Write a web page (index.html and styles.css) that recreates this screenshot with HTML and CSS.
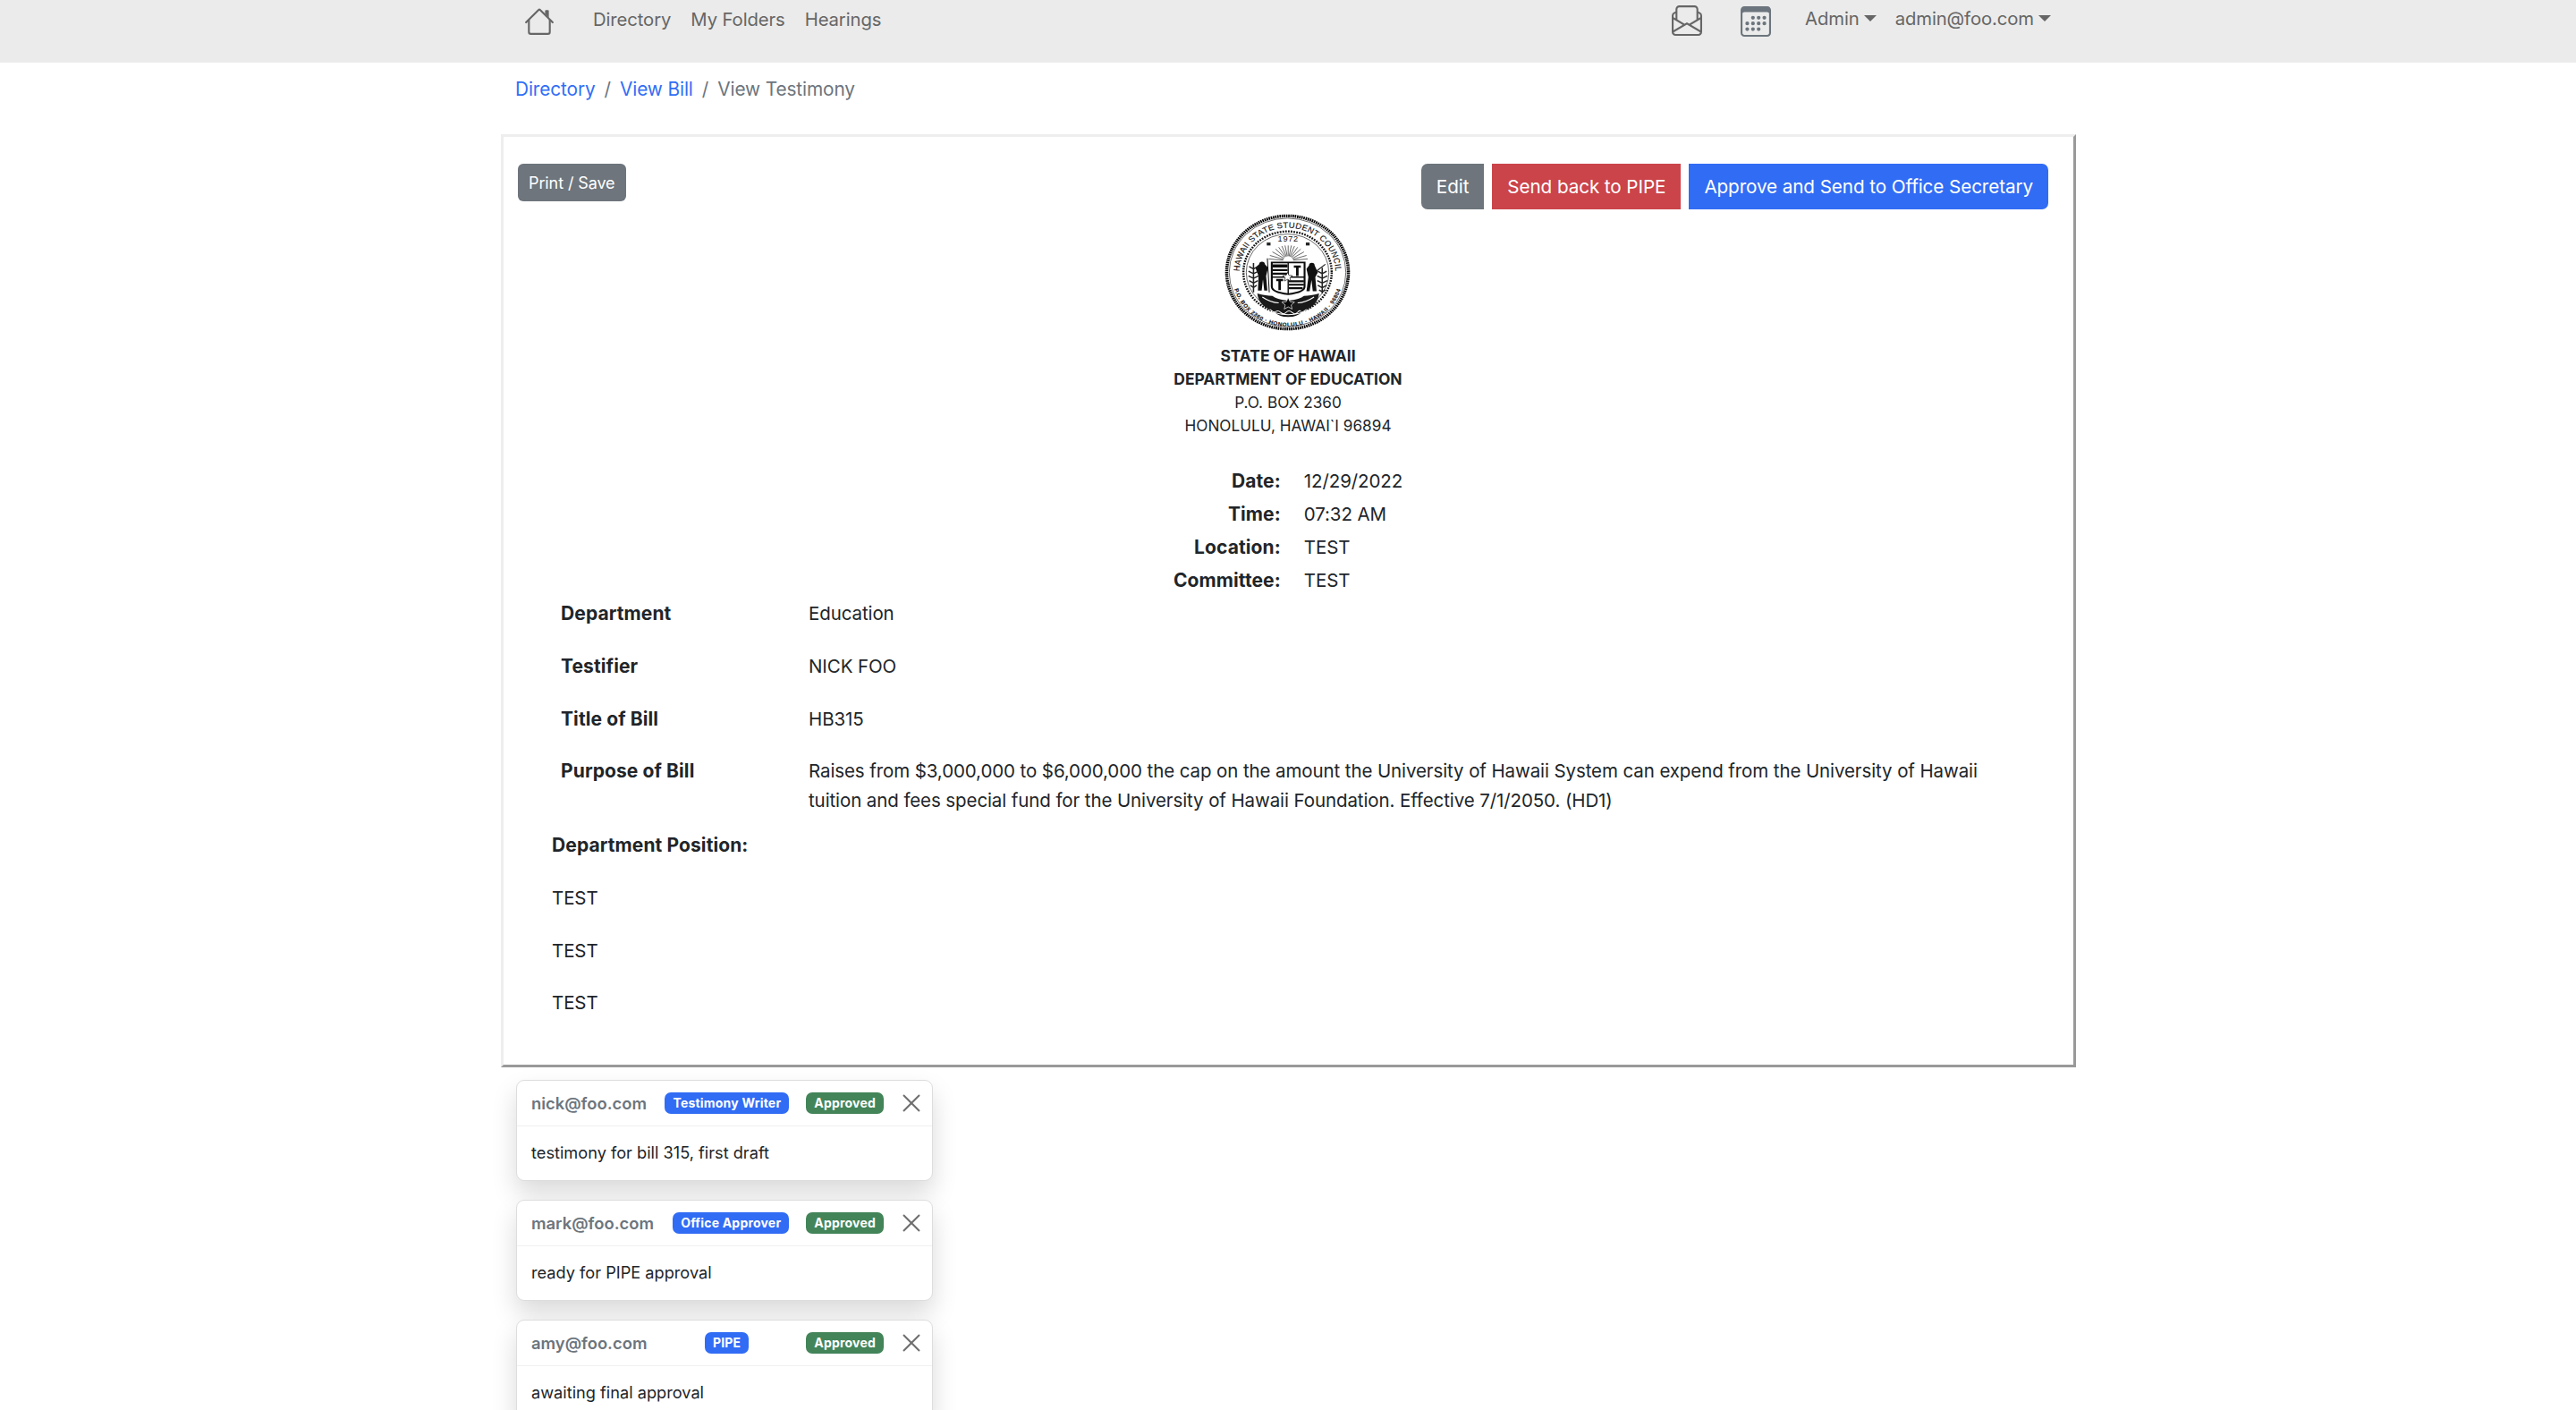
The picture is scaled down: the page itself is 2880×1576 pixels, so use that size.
FILE: index.html
```html
<!DOCTYPE html>
<html lang="en">
<head>
    <meta charset="UTF-8">
    <meta name="viewport" content="width=device-width, initial-scale=1.0">
    <title>View Testimony</title>
    <link rel="stylesheet" href="styles.css">
</head>
<body>
    <nav class="navbar">
        <svg class="nav-home" viewBox="0 0 16 16" fill="currentColor">
            <path fill-rule="evenodd" d="M2 13.5V7h1v6.5a.5.5 0 0 0 .5.5h9a.5.5 0 0 0 .5-.5V7h1v6.5a1.5 1.5 0 0 1-1.5 1.5h-9A1.5 1.5 0 0 1 2 13.5zm11-11V6l-2-2V2.5a.5.5 0 0 1 .5-.5h1a.5.5 0 0 1 .5.5z"/>
            <path fill-rule="evenodd" d="M7.293 1.5a1 1 0 0 1 1.414 0l6.647 6.646a.5.5 0 0 1-.708.708L8 2.207 1.354 8.854a.5.5 0 1 1-.708-.708L7.293 1.5z"/>
        </svg>
        <a class="nav-link first" href="#">Directory</a>
        <a class="nav-link" href="#">My Folders</a>
        <a class="nav-link" href="#">Hearings</a>

        <div class="nav-right">
            <svg class="nav-icon" viewBox="0 0 16 16" fill="currentColor">
                <path d="M4 0a2 2 0 0 0-2 2v1.133l-.941.502A2 2 0 0 0 0 5.4V14a2 2 0 0 0 2 2h12a2 2 0 0 0 2-2V5.4a2 2 0 0 0-1.059-1.765L14 3.133V2a2 2 0 0 0-2-2H4Zm10 4.267.47.25A1 1 0 0 1 15 5.4v.817l-1 .6v-2.55Zm-1 3.15-3.75 2.25L8 8.917l-1.25.75L3 7.417V2a1 1 0 0 1 1-1h8a1 1 0 0 1 1 1v5.417Zm-11-.6-1-.6V5.4a1 1 0 0 1 .53-.882L2 4.267v2.55Zm13 .566v5.734l-4.778-2.867L15 7.383Zm-.035 6.88A1 1 0 0 1 14 15H2a1 1 0 0 1-.965-.738L8 10.083l6.965 4.18ZM1 13.116V7.383l4.778 2.867L1 13.117Z"/>
            </svg>
            <svg class="nav-icon calendar" viewBox="0 0 16 16" fill="currentColor">
                <path d="M14 0H2a2 2 0 0 0-2 2v12a2 2 0 0 0 2 2h12a2 2 0 0 0 2-2V2a2 2 0 0 0-2-2zM1 3.857C1 3.384 1.448 3 2 3h12c.552 0 1 .384 1 .857v10.286c0 .473-.448.857-1 .857H2c-.552 0-1-.384-1-.857V3.857z"/>
                <path d="M6.5 7a1 1 0 1 0 0-2 1 1 0 0 0 0 2zm3 0a1 1 0 1 0 0-2 1 1 0 0 0 0 2zm3 0a1 1 0 1 0 0-2 1 1 0 0 0 0 2zm-9 3a1 1 0 1 0 0-2 1 1 0 0 0 0 2zm3 0a1 1 0 1 0 0-2 1 1 0 0 0 0 2zm3 0a1 1 0 1 0 0-2 1 1 0 0 0 0 2zm3 0a1 1 0 1 0 0-2 1 1 0 0 0 0 2zm-9 3a1 1 0 1 0 0-2 1 1 0 0 0 0 2zm3 0a1 1 0 1 0 0-2 1 1 0 0 0 0 2zm3 0a1 1 0 1 0 0-2 1 1 0 0 0 0 2z"/>
            </svg>
            <a class="nav-link dropdown admin" href="#">Admin</a>
            <a class="nav-link dropdown" href="#">admin@foo.com</a>
        </div>
    </nav>

    <ol class="breadcrumb">
        <li><a href="#">Directory</a></li>
        <li class="sep">/</li>
        <li><a href="#">View Bill</a></li>
        <li class="sep">/</li>
        <li class="current">View Testimony</li>
    </ol>

    <main class="testimony">
        <div class="toolbar">
            <button class="btn btn-small btn-gray">Print / Save</button>
            <div class="actions">
                <button class="btn btn-gray">Edit</button>
                <button class="btn btn-red">Send back to PIPE</button>
                <button class="btn btn-blue">Approve and Send to Office Secretary</button>
            </div>
        </div>

        <svg class="seal" viewBox="0 0 200 200" preserveAspectRatio="none">
            <defs>
                <path id="seal-top" d="M25 112a76 76 0 1 1 150 0"/>
                <path id="seal-bottom" d="M12 104a88 88 0 0 0 176 0"/>
            </defs>
            <!-- rope edge -->
            <circle cx="100" cy="100" r="96.500" fill="none" stroke="#000" stroke-width="5" stroke-dasharray="2.400 1.100"/>
            <circle cx="100" cy="100" r="92.500" fill="none" stroke="#222" stroke-width="1"/>
            <text class="seal-text"><textPath href="#seal-top" startOffset="50%" text-anchor="middle">HAWAII STATE STUDENT COUNCIL</textPath></text>
            <text class="seal-text small"><textPath href="#seal-bottom" startOffset="50%" text-anchor="middle">P.O. BOX 2360 · HONOLULU · HAWAII · 96804</textPath></text>
            <!-- beaded rings -->
            <circle cx="100" cy="100" r="70" fill="none" stroke="#111" stroke-width="3.500" stroke-dasharray="2.600 1.800"/>
            <circle cx="100" cy="100" r="65.500" fill="none" stroke="#222" stroke-width="1"/>
            <text class="seal-year" x="101" y="48" text-anchor="middle">1972</text>
            <!-- sunrise and flags -->
            <path class="rays" d="M101 80V54M101 80L96 54M101 80L106 54M101 80L91 55M101 80L111 55M101 80L86 57M101 80L116 57M101 80L81 60M101 80L121 60M101 80L76 65M101 80L126 65M101 80L72 71M101 80L130 71M101 80L70 77M101 80L132 77"/>
            <circle cx="101" cy="80" r="8" fill="#fff"/>
            <rect x="67" y="49" width="6" height="5" fill="#222"/>
            <rect x="129" y="49" width="6" height="5" fill="#222"/>
            <!-- shield -->
            <path d="M75 83H127V124Q127 134 101 137Q75 134 75 124Z" fill="#fff" stroke="#0c0c0c" stroke-width="3"/>
            <path d="M76 90H100M76 96H100M76 102H100M76 88H100M102 115H126M102 121H126M102 127H124" stroke="#0c0c0c" stroke-width="3.400"/>
            <path d="M101 83V136M75 108H127" stroke="#0c0c0c" stroke-width="2"/>
            <path d="M110 88h11v4h-3.500v14h-4V92H110zM82 111h11v4h-3.500v15h-4V115H82z" fill="#0c0c0c"/>
            <path d="M100 100l2.300 5 5.500.6-4.100 3.600 1.200 5.400-4.900-2.800-4.900 2.800 1.200-5.400-4.100-3.600 5.500-.6z" fill="#fff" stroke="#0c0c0c" stroke-width="1"/>
            <!-- figures either side -->
            <path d="M55 86a4.500 4.500 0 0 1 9 0l5 6-3 14 2 25h-5l-2-19-2 19h-6l1-25-5-14z" fill="#111"/>
            <path d="M134 88a4.500 4.500 0 0 1 9 0l5 12-4 8 2 24h-6l-2-19-3 19h-5l3-24-3-14z" fill="#111"/>
            <path d="M68 76l3 58M143 100l17-14" stroke="#111" stroke-width="1.500"/>
            <!-- ferns -->
            <path class="fern" d="M46 84V134M39 90l7 4M53 90l-7 4M38 98l8 4M54 98l-8 4M38 106l8 4M54 106l-8 4M39 114l7 4M53 114l-7 4M41 122l5 4M51 122l-5 4"/>
            <path class="fern" d="M155 92V136M148 98l7 4M162 98l-7 4M147 106l8 4M163 106l-8 4M147 114l8 4M163 114l-8 4M148 122l7 4M162 122l-7 4M150 130l5 3M160 130l-5 3"/>
            <!-- foot of the seal -->
            <path d="M52 136q14 4 24 4 6 6 25 8 19-2 25-8 10 0 24-4-2 22-26 30-8 10-23 10t-23-10q-24-8-26-30z" fill="#1a1a1a"/>
            <path d="M101 143l3 7 7 .8-5.300 4.700 1.500 7-6.200-3.700-6.200 3.700 1.500-7-5.300-4.700 7-.8z" fill="#0a0a0a" stroke="#fff" stroke-width="1"/>
            <path d="M60 142q14 10 26 10M142 142q-14 10-26 10M72 163q8 9 29 9t29-9M80 168q4-5 9 0t9 0 9 0 9 0 5-1" stroke="#fff" stroke-width="1.500" fill="none"/>
        </svg>

        <div class="centered">
            <address class="letterhead">
                <strong>STATE OF HAWAII</strong>
                <strong>DEPARTMENT OF EDUCATION</strong>
                <span>P.O. BOX 2360</span>
                <span>HONOLULU, HAWAI`I 96894</span>
            </address>

            <dl class="hearing">
                <dt>Date:</dt><dd>12/29/2022</dd>
                <dt>Time:</dt><dd>07:32 AM</dd>
                <dt>Location:</dt><dd>TEST</dd>
                <dt>Committee:</dt><dd>TEST</dd>
            </dl>
        </div>

        <div class="info">
            <div class="info-row"><strong>Department</strong><span>Education</span></div>
            <div class="info-row"><strong>Testifier</strong><span>NICK FOO</span></div>
            <div class="info-row"><strong>Title of Bill</strong><span>HB315</span></div>
            <div class="info-row"><strong>Purpose of Bill</strong><span>Raises from $3,000,000 to $6,000,000 the cap on the amount the University of Hawaii System can expend from the University of Hawaii tuition and fees special fund for the University of Hawaii Foundation. Effective 7/1/2050. (HD1)</span></div>
        </div>

        <div class="position">
            <p><strong>Department Position:</strong></p>
            <p>TEST</p>
            <p>TEST</p>
            <p>TEST</p>
        </div>
    </main>

    <section class="toasts">
        <div class="toast">
            <div class="toast-header">
                <strong class="toast-email">nick@foo.com</strong>
                <span class="badge badge-blue">Testimony Writer</span>
                <span class="badge badge-green">Approved</span>
                <svg class="toast-close" viewBox="0 0 20 20"><path d="M1 1L19 19M19 1L1 19"/></svg>
            </div>
            <div class="toast-body">testimony for bill 315, first draft</div>
        </div>
        <div class="toast">
            <div class="toast-header">
                <strong class="toast-email">mark@foo.com</strong>
                <span class="badge badge-blue">Office Approver</span>
                <span class="badge badge-green">Approved</span>
                <svg class="toast-close" viewBox="0 0 20 20"><path d="M1 1L19 19M19 1L1 19"/></svg>
            </div>
            <div class="toast-body">ready for PIPE approval</div>
        </div>
        <div class="toast">
            <div class="toast-header">
                <strong class="toast-email">amy@foo.com</strong>
                <span class="badge badge-blue badge-short">PIPE</span>
                <span class="badge badge-green">Approved</span>
                <svg class="toast-close" viewBox="0 0 20 20"><path d="M1 1L19 19M19 1L1 19"/></svg>
            </div>
            <div class="toast-body">awaiting final approval</div>
        </div>
    </section>
</body>
</html>
```

FILE: styles.css
```css
html, body {
    height: 100%;
    overflow: hidden;
}
body {
    margin: 0;
    font-family: Inter, "Noto Sans", sans-serif;
    font-size: 20.5px;
    line-height: 32.8px;
    letter-spacing: -0.1px;
    color: #212529;
    background: #fff;
}
a {
    text-decoration: none;
    color: #316ef6;
}

.navbar {
    display: flex;
    align-items: flex-start;
    height: 70px;
    padding-left: 586px;
    padding-right: 587px;
    background: #ebebeb;
    color: #666;
}
.nav-home {
    width: 34px;
    height: 34px;
    margin-top: 7px;
}
.nav-link {
    margin-top: 6px;
    margin-left: 22px;
    color: #666;
    font-size: 20.3px;
}
.nav-link.first {
    margin-left: 43px;
}
.nav-right {
    display: flex;
    align-items: flex-start;
    margin-left: auto;
}
.nav-icon {
    width: 34px;
    height: 34px;
    margin-top: 6px;
    margin-right: 43px;
    color: #666;
}
.nav-icon.calendar {
    margin-top: 7px;
    margin-right: 17px;
    color: #6c757d;
}
.dropdown {
    margin-top: 5px;
    margin-left: 21px;
}
.dropdown::after {
    content: "";
    display: inline-block;
    margin-left: 5px;
    vertical-align: 4px;
    border-top: 7px solid #666;
    border-left: 7px solid transparent;
    border-right: 7px solid transparent;
}

.breadcrumb {
    display: flex;
    margin: 0;
    padding: 14px 0 0 576px;
    height: 66px;
    box-sizing: border-box;
    list-style: none;
    font-size: 20.8px;
}
.breadcrumb .sep {
    margin: 0 10px;
    color: #6c757d;
}
.breadcrumb .current {
    color: #6c757d;
}

.testimony {
    width: 1761px;
    margin: 14px 0 0 560px;
    padding: 30px 28px 52px 16px;
    box-sizing: border-box;
    border: 3px solid #eee;
    border-right-color: #999;
    border-bottom-color: #999;
}
.toolbar {
    display: flex;
    justify-content: space-between;
    align-items: flex-start;
}
.actions {
    display: flex;
    gap: 9px;
}
.btn {
    height: 51px;
    padding: 0 17px;
    border: 0;
    border-radius: 7px;
    font-family: inherit;
    font-size: 20.7px;
    letter-spacing: -0.1px;
    color: #fff;
}
.btn-small {
    height: 42px;
    padding: 0 12px;
    font-size: 18px;
    border-radius: 6px;
}
.btn-gray {
    background: #6e757c;
}
.actions .btn-gray {
    border-radius: 7px 0 0 7px;
}
.btn-red {
    background: #cb444a;
    border-radius: 0;
}
.btn-blue {
    background: #316cf4;
    border-radius: 0 7px 7px 0;
}

.seal {
    display: block;
    width: 141px;
    height: 131px;
    margin: 5px 0 0 790px;
}
.seal-text {
    font-family: "Liberation Sans", sans-serif;
    font-size: 13.5px;
    letter-spacing: 0.4px;
    fill: #111;
    stroke: #111;
    stroke-width: 0.2px;
}
.seal-text.small {
    font-size: 9px;
    font-weight: 700;
    letter-spacing: 0.8px;
}
.seal-year {
    font-family: "Liberation Sans", sans-serif;
    font-size: 13px;
    letter-spacing: 1px;
    fill: #111;
}
.rays {
    fill: none;
    stroke: #222;
    stroke-width: 1;
}
.fern {
    fill: none;
    stroke: #222;
    stroke-width: 2.200;
}

.centered {
    padding-left: 11px;
}
.letterhead {
    display: flex;
    flex-direction: column;
    align-items: center;
    margin: 15px 0 0;
    font-size: 17.2px;
    letter-spacing: 0;
    line-height: 26px;
    font-style: normal;
}
.letterhead strong {
    font-size: 17.4px;
    font-weight: 700;
}

.hearing {
    display: grid;
    grid-template-columns: auto auto;
    justify-content: center;
    column-gap: 26px;
    margin: 30px 0 0;
    line-height: 37px;
}
.hearing dt {
    font-size: 21px;
    font-weight: 700;
    letter-spacing: 0.1px;
    text-align: right;
}
.hearing dd {
    margin: 0;
}

.info {
    margin: 3px 0 0;
    padding-left: 48px;
}
.info-row {
    display: grid;
    grid-template-columns: 277px 1fr;
    margin-bottom: 26px;
    padding-right: 30px;
}
.info-row strong, .position strong {
    font-size: 21px;
    font-weight: 700;
    letter-spacing: 0.1px;
}

.position {
    margin-top: -9px;
    padding-left: 38px;
}
.position p {
    margin: 0 0 26px;
}
.position p:last-child {
    margin-bottom: 0;
}

.toasts {
    display: flex;
    flex-direction: column;
    gap: 21px;
    width: 466px;
    margin: 14px 0 0 577px;
}
.toast {
    box-sizing: border-box;
    height: 113px;
    border: 1px solid #ddd;
    border-radius: 9px;
    background: #fff;
    box-shadow: 0 14px 28px rgba(0, 0, 0, 0.15);
    font-size: 18.2px;
    letter-spacing: 0;
    line-height: 27px;
}
.toast-header {
    display: flex;
    align-items: center;
    height: 51px;
    padding: 0 13px 0 16px;
    border-bottom: 1px solid #f0f0f0;
    box-sizing: border-box;
}
.toast-email {
    margin-right: auto;
    font-size: 18.4px;
    font-weight: 600;
    color: #6c757d;
}
.badge {
    padding: 0 9px;
    border-radius: 7px;
    font-size: 14px;
    letter-spacing: 0.2px;
    line-height: 24px;
    font-weight: 700;
    color: #fff;
}
.badge-blue {
    background: #316cf4;
    margin-right: 19px;
}
.badge-short {
    margin-right: 64px;
}
.badge-green {
    background: #438459;
    margin-right: 21px;
}
.toast-close {
    width: 20px;
    height: 20px;
    fill: none;
    stroke: #6f6f6f;
    stroke-width: 2;
}
.toast-body {
    padding: 16px;
}
```
